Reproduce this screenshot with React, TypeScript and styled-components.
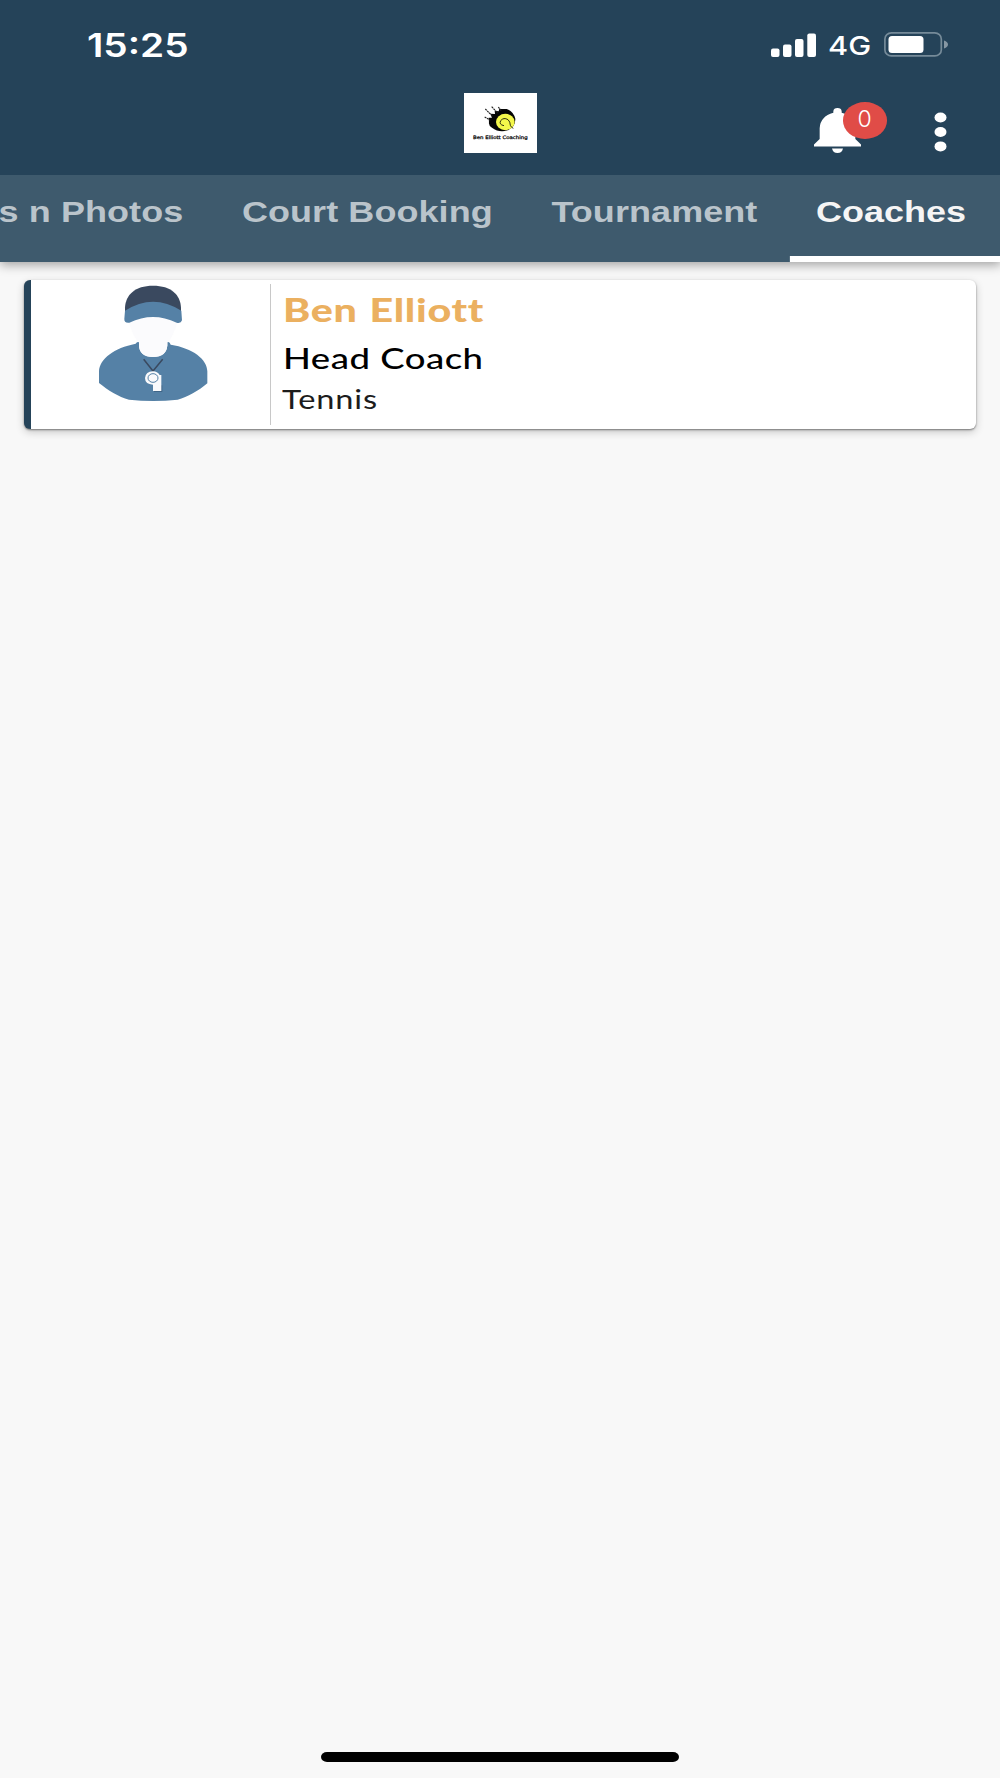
import React from "react";
import styled, { createGlobalStyle } from "styled-components";

const GlobalStyle = createGlobalStyle`
  *, *::before, *::after { box-sizing: border-box; }
  body { margin: 0; background: #f8f8f8; }
`;

const Screen = styled.div`
  display: flex;
  flex-direction: column;
  width: 1000px;
  height: 1778px;
  overflow: hidden;
  background: #f8f8f8;
  font-family: "Liberation Sans", Arial, sans-serif;
`;

const Header = styled.header`
  position: relative;
  z-index: 1;
  display: flex;
  flex-direction: column;
  height: 175px;
  flex: none;
  background: #254359;
`;

const StatusBar = styled.div`
  display: flex;
  justify-content: space-between;
  align-items: center;
  height: 89px;
  padding: 0 52px 0 87px;
`;

/* Wide lettering: glyphs are stretched horizontally from their left edge. */
const Wide = styled.span<{ $stretch: number }>`
  display: block;
  white-space: nowrap;
  transform: scaleX(${(p) => p.$stretch});
  transform-origin: left center;
`;

const Clock = styled(Wide)`
  padding-top: 2px;
  font: 600 32px/40px Inter, sans-serif;
  color: #fff;
`;

const StatusIcons = styled.div`
  display: flex;
  align-items: center;
`;

const Network = styled(Wide)`
  width: 56px;
  margin-left: 11px;
  padding-top: 3px;
  font: 500 26px/32px Inter, sans-serif;
  color: #fff;
`;

const AppBar = styled.div`
  display: grid;
  grid-template-columns: 1fr 73px 1fr;
  height: 86px;
`;

const Logo = styled.div`
  grid-column: 2;
  width: 73px;
  height: 60px;
  margin-top: 4px;
  background: #fff;
`;

const Actions = styled.div`
  display: flex;
  justify-content: flex-end;
  padding: 12px 53px 0 0;
  gap: 47px;
`;

const BellButton = styled.div`
  position: relative;
  width: 73px;
  height: 54px;
`;

const BellIcon = styled.svg`
  display: block;
  margin-top: 6px;
`;

const Badge = styled.span`
  position: absolute;
  top: 1px;
  left: 28.5px;
  display: flex;
  align-items: center;
  justify-content: center;
  width: 44px;
  height: 36.5px;
  padding-bottom: 3px;
  border-radius: 50%;
  background: #e04c47;
  color: #fff;
  font: 300 23px/30px Inter, sans-serif;
`;

const MoreIcon = styled.svg`
  display: block;
  margin-top: 9.5px;
`;

const Tabs = styled.nav`
  display: flex;
  justify-content: flex-end;
  flex: none;
  width: 807px;
  height: 87px;
  background: #3e5a6d;
  box-shadow: 0 3px 9px rgba(0, 0, 0, 0.35);
  transform: scaleX(1.24);
  transform-origin: left top;
`;

const Tab = styled.div<{ $active?: boolean }>`
  flex: none;
  height: 87px;
  padding: 19px ${(p) => (p.$active ? 28 : 26)}px 0 21.3px;
  border-bottom: 6px solid ${(p) => (p.$active ? "#fff" : "transparent")};
  color: ${(p) => (p.$active ? "#f5f5f5" : "#bac4cb")};
  font-size: 29px;
  font-weight: 700;
  line-height: 36px;
  letter-spacing: ${(p) => (p.$active ? 0 : 0.07)}px;
  white-space: nowrap;
`;

const Content = styled.main`
  display: flex;
  flex-direction: column;
  flex: 1;
  padding: 18px 24px 0;
`;

const CoachCard = styled.article`
  display: flex;
  height: 149px;
  border-left: 7.5px solid #254359;
  border-radius: 6px;
  background: #fff;
  box-shadow: 0 1px 2px rgba(0, 0, 0, 0.45), 0 3px 9px rgba(0, 0, 0, 0.2);
`;

const Portrait = styled.div`
  width: 240px;
  margin: 4px 0;
  padding-left: 67px;
  border-right: 1px solid #c8c8c8;
`;

const Details = styled.div`
  display: flex;
  flex-direction: column;
  padding: 9px 0 0 12px;
  font-family: Lato, sans-serif;
  font-variant-ligatures: none;
`;

const CoachName = styled(Wide)`
  font-size: 33px;
  font-weight: 900;
  line-height: 40px;
  letter-spacing: 0.55px;
  word-spacing: 1px;
  color: #ebb060;
`;

const Role = styled(Wide)`
  margin-top: 9px;
  font-size: 28.5px;
  font-weight: 500;
  line-height: 40px;
  letter-spacing: 0.4px;
  color: #000;
`;

const Sport = styled(Wide)`
  margin: 2px 0 0 -1px;
  font-size: 26.5px;
  font-weight: 400;
  line-height: 38px;
  letter-spacing: 0.7px;
  color: #1c1c1c;
`;

const HomeBar = styled.div`
  width: 358px;
  height: 10px;
  margin: auto auto 16px;
  border-radius: 6px / 5px;
  background: #000;
`;

const Signal = () => (
  <svg width="46" height="24" viewBox="0 0 46 24" fill="#fff">
    <rect x="0" y="15.5" width="8.5" height="8.5" rx="2" />
    <rect x="12" y="11.5" width="8.5" height="12.5" rx="2" />
    <rect x="24" y="6" width="8.5" height="18" rx="2" />
    <rect x="36.3" y="0.5" width="8.7" height="23.5" rx="2" />
  </svg>
);

const Battery = () => (
  <svg width="64" height="25" viewBox="0 0 64 25">
    <rect x="0.9" y="0.9" width="56.4" height="23" rx="6.5" ry="6" fill="none" stroke="#768b99" strokeWidth="1.7" />
    <rect x="4.5" y="4" width="35" height="17" rx="3.5" fill="#fff" />
    <path d="M60 8.5 Q64 10 64 12.5 Q64 15 60 16.5Z" fill="#8697a3" />
  </svg>
);

const ClubLogo = () => (
  <svg width="73" height="60" viewBox="0 0 219 180">
    <path d="M75 88 L74 74 L84 74 L79 62 L93 63 L92 53 L104 55 L106 47 Q116 49 128 48 Q148 55 154 77 Q155 102 131 112 Q105 120 84 104 Q73 97 75 88Z" fill="#050505" />
    <path d="M64 48 L86 70 M83 41 L101 60 M62 72 L79 82 M103 42 L112 54" stroke="#222" strokeWidth="3.5" strokeDasharray="6 2" />
    <ellipse cx="124" cy="87" rx="28" ry="24.5" fill="#f4f74b" />
    <path d="M120 98 Q104 95 110 83 Q119 72 132 80 Q139 86 139 97 Q142 104 148 106" fill="none" stroke="#303010" strokeWidth="3" />
    <text x="27" y="137" fontFamily="DejaVu Sans, sans-serif" fontSize="14" fill="#111" stroke="#111" strokeWidth="0.8" textLength="164" lengthAdjust="spacingAndGlyphs">
      Ben Elliott Coaching
    </text>
  </svg>
);

const Bell = () => (
  <BellIcon width="47" height="46" viewBox="0 0 141 141" preserveAspectRatio="none" fill="#fff">
    <path d="M58 18 V13 Q59 3 70.5 3 Q82 3 83 13 V18 Q123 29 124 65 V98 L141 115 V121 H0 V115 L17 98 V65 Q19 29 58 18Z" />
    <path d="M54 127 H87 Q84 141 70.5 141 Q57 141 54 127Z" />
  </BellIcon>
);

const More = () => (
  <MoreIcon width="13" height="41" viewBox="0 0 13 41" fill="#fff">
    <ellipse cx="6.5" cy="6.5" rx="6" ry="5" />
    <ellipse cx="6.5" cy="21" rx="6" ry="5" />
    <ellipse cx="6.5" cy="35.4" rx="6" ry="5" />
  </MoreIcon>
);

const CoachFigure = () => (
  <svg width="110" height="118" viewBox="264 72 330 354">
    <path d="M355 180 Q366 228 390 252 H470 Q492 228 504 180 Q430 150 355 180Z" fill="#fbfbfd" />
    <path d="M377 251 Q381 244 387 247 V256 Q388 291 429 291 Q470 291 472 256 V247 Q479 244 482 254 C548 264 592 298 592 334 V370 C565 393 533 411 503 419 Q430 427 357 419 C326 411 293 390 267 369 V334 C269 296 312 264 377 251Z" fill="#5581a6" />
    <path d="M387 246 H472 V256 Q470 291 429 291 Q388 291 387 256Z" fill="#fbfbfd" />
    <path d="M345 155 V143 C347 104 375 77 429 77 C484 77 511 104 513 143 V155Z" fill="#3a495f" />
    <path d="M345 152 Q429 98 514 152 L516 181 Q513 191 500 188 Q429 154 358 188 Q342 190 343 176Z" fill="#5581a6" />
    <path d="M401 298 L429 333 L458 298" fill="none" stroke="#3a495f" strokeWidth="4.5" />
    <path d="M432 376 H457 V396 H432Z" fill="#3f6587" />
    <path d="M429 334 Q442 334 449 345 H454 V393 H429 V374 Q405 373 405 354 Q407 335 429 334Z" fill="#fafafc" />
    <ellipse cx="429" cy="354" rx="15" ry="13" fill="none" stroke="#5581a6" strokeWidth="3" />
  </svg>
);

const tabs = ["s n Photos", "Court Booking", "Tournament", "Coaches"];

export default function App() {
  return (
    <Screen>
      <GlobalStyle />
      <Header>
        <StatusBar>
          <Clock $stretch={1.21}>15:25</Clock>
          <StatusIcons>
            <Signal />
            <Network $stretch={1.18}>4G</Network>
            <Battery />
          </StatusIcons>
        </StatusBar>
        <AppBar>
          <Logo>
            <ClubLogo />
          </Logo>
          <Actions>
            <BellButton>
              <Bell />
              <Badge>0</Badge>
            </BellButton>
            <More />
          </Actions>
        </AppBar>
      </Header>
      <Tabs>
        {tabs.map((label) => (
          <Tab key={label} $active={label === "Coaches"}>
            {label}
          </Tab>
        ))}
      </Tabs>
      <Content>
        <CoachCard>
          <Portrait>
            <CoachFigure />
          </Portrait>
          <Details>
            <CoachName $stretch={1.25}>Ben Elliott</CoachName>
            <Role $stretch={1.28}>Head Coach</Role>
            <Sport $stretch={1.23}>Tennis</Sport>
          </Details>
        </CoachCard>
        <HomeBar />
      </Content>
    </Screen>
  );
}
